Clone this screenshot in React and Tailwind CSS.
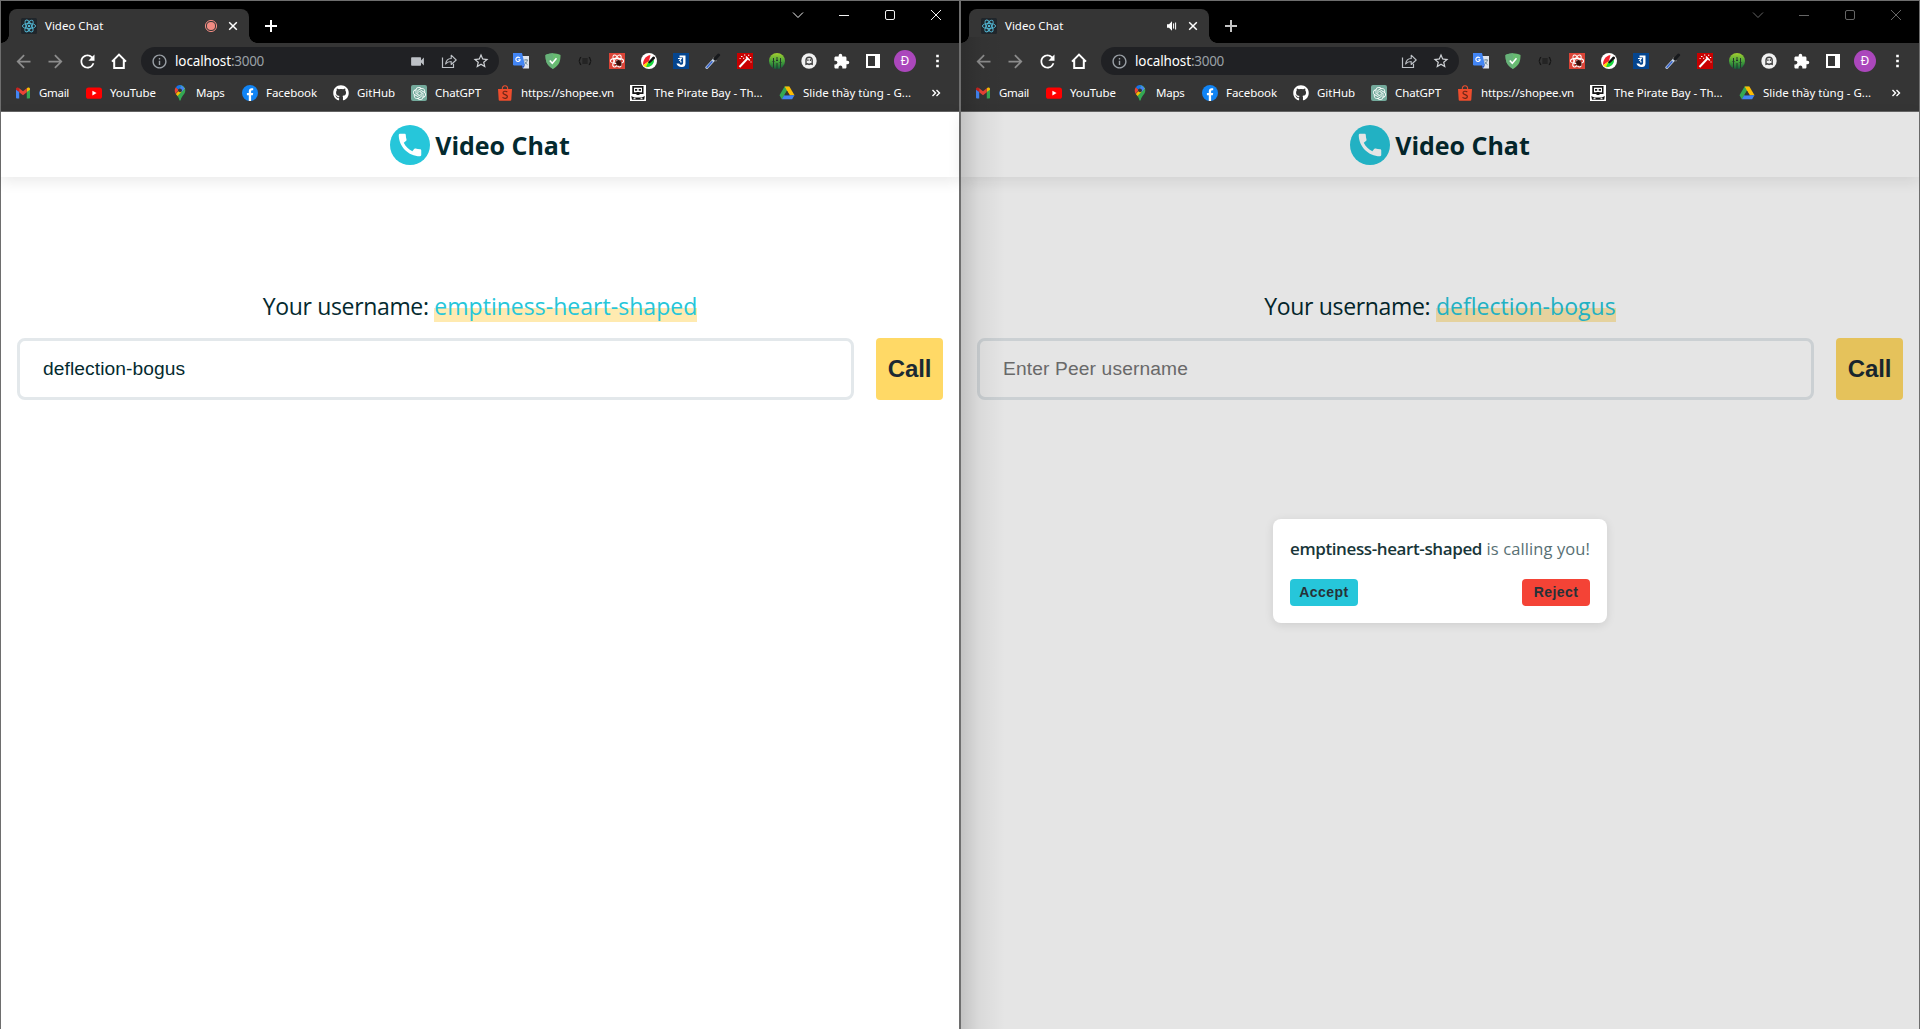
import { FaGithub } from 'react-icons/fa'
import { SiOpenai } from 'react-icons/si'
import {
  MdArrowBack, MdArrowForward, MdRefresh, MdOutlineInfo, MdVideocam,
  MdStarOutline, MdExtension, MdCall,
} from 'react-icons/md'

const Svg = ({ size = 16, box = '0 0 16 16', className = '', children }) => (
  <svg width={size} height={size} viewBox={box} className={'block shrink-0 ' + className} fill="none">
    {children}
  </svg>
)

/* ---------- tab and toolbar icons ---------- */

const Atom = ({ stroke, width = 0.9 }) => (
  <g stroke={stroke} strokeWidth={width}>
    <ellipse cx="8" cy="8" rx="6.6" ry="2.6" />
    <ellipse cx="8" cy="8" rx="6.6" ry="2.6" transform="rotate(60 8 8)" />
    <ellipse cx="8" cy="8" rx="6.6" ry="2.6" transform="rotate(120 8 8)" />
    <circle cx="8" cy="8" r="1.2" fill={stroke} stroke="none" />
  </g>
)

const ReactFavicon = () => (
  <Svg><rect width="16" height="16" rx="1.5" fill="#20262b" /><Atom stroke="#53b9d6" /></Svg>
)

const Recording = () => (
  <Svg size={14} box="0 0 14 14">
    <circle cx="7" cy="7" r="5.6" stroke="#f28b82" strokeWidth="1" />
    <circle cx="7" cy="7" r="4.1" fill="#f28b82" />
  </Svg>
)

const Speaker = () => (
  <Svg size={14} box="0 0 14 14">
    <path d="M3 5.3h2l3-3v9.4l-3-3H3z" fill="#fff" />
    <path d="M9.6 4.4v5.2M11.6 3.5v7" stroke="#fff" strokeWidth="1" />
  </Svg>
)

const Home = () => (
  <Svg size={18} box="0 0 18 18">
    <path d="M2 9.6 9 2.6l7 7M4.2 8v8h9.6V8" stroke="#fff" strokeWidth="2" />
  </Svg>
)

const Share = () => (
  <Svg size={16}>
    <path d="M1.5 4.5v10h11v-3.800" stroke="#bdc1c6" strokeWidth="1.2" />
    <path d="M4.600 11c.5-3.600 2.400-5.400 5.600-5.500V2.200L15.200 7l-5 4.500V8.500C7.700 8.500 6 9.200 4.600 11z" stroke="#bdc1c6" strokeWidth="1.1" strokeLinejoin="round" />
  </Svg>
)

/* ---------- extension icons ---------- */

const Translate = () => (
  <Svg>
    <path d="M6 3h10v12.500h-6z" fill="#dfe3ea" />
    <path d="M0 0h9l3 12.500H1.200A1.200 1.200 0 0 1 0 11.300z" fill="#4285f4" />
    <path d="M8.500 12.500H12L9.800 15.500z" fill="#2a56c6" />
    <path d="M6.900 5.100A2.200 2.200 0 1 0 7.200 6.700H5.200" stroke="#fff" strokeWidth="1.100" />
    <path d="M10.800 7h4.200M13 6v1M14.400 7c-.4 2-1.600 3.500-3 4.400M11.800 8.600c.6 1.300 1.500 2.300 2.700 3" stroke="#607d8b" strokeWidth=".8" />
  </Svg>
)
const Shield = () => (
  <Svg>
    <path d="M8 .2C10.500.2 13.300.9 15.500 2c0 6-1.100 10.400-7.500 13.900C1.600 12.400.5 8 .5 2 2.700.9 5.500.2 8 .2z" fill="#68bc71" />
    <path d="M8 .2C5.500.2 2.700.9.5 2c0 6 1.100 10.400 7.500 13.900z" fill="#67b279" />
    <path d="m4.800 7.500 2.500 2.700L11.500 5.300" stroke="#fff" strokeWidth="1.600" />
  </Svg>
)
const Braces = () => (
  <Svg>
    <path d="M4.200 4.300C2.300 4.300 3.300 7.900 1.700 8c1.600.1.600 3.700 2.500 3.700M11.800 4.300c1.900 0 .9 3.600 2.500 3.700-1.600.1-.6 3.700-2.500 3.700M5.300 6h5.400M5.300 8h5.400M5.300 10h5.400" stroke="#151515" strokeWidth="1.200" />
  </Svg>
)
const ReactTools = () => (
  <Svg>
    <rect width="16" height="16" fill="#db4437" />
    <Atom stroke="#fff" width={1.1} />
    <ellipse cx="9.800" cy="9.800" rx="2.400" ry="2.900" fill="#3a0f0b" transform="rotate(-40 9.800 9.800)" />
    <path d="m6.500 9.500 6 3M8 13l3.500-6M6 11.500h6.500M7.600 7.500l4 5.500" stroke="#3a0f0b" strokeWidth=".8" />
  </Svg>
)
const ColorPick = () => (
  <Svg>
    <circle cx="8" cy="8" r="8" fill="#fff" />
    <path d="M2.200 12.200C1.500 8 4 3 9.500 2L8 8z" fill="#f5222d" />
    <path d="M2.200 12.200 8 8l1 5.200c-2 1.700-5 1.500-6.800-1z" fill="#ffe000" />
    <path d="M5 13.800 8 8l5-1c.3 4-3.500 7.600-8 6.800z" fill="#18d63f" />
    <path d="m7 9.300 4.800-5.500a1.400 1.400 0 0 1 2 1.900L8.500 10.500z" fill="#111" />
  </Svg>
)
const JTile = () => (
  <Svg>
    <rect width="16" height="16" fill="#04458f" />
    <path d="M6.500 2.500h6v8a3.700 3.700 0 0 1-4 3.500c-2.500 0-4.500-1.300-5-3.500h2.700c.4.900 1.200 1.300 2.100 1.300 1.200 0 1.800-.8 1.800-2V4.500H6.500z" fill="#fff" />
    <path d="M5 5.500h3.200L6.700 7.500c1.200.2 1.500 1.200 1 2" stroke="#fff" strokeWidth="1.200" />
  </Svg>
)
const Dropper = () => (
  <Svg>
    <path d="m1.800 14.500 7.400-8" stroke="#c9d6e8" strokeWidth="2.800" strokeLinecap="round" />
    <path d="m2 14.200 5-5.400" stroke="#3461c9" strokeWidth="1.600" strokeLinecap="round" />
    <path d="m8 4.700 3.500 3.500" stroke="#777" strokeWidth="1.600" />
    <path d="m10 6 3.600-4" stroke="#17191c" strokeWidth="3" strokeLinecap="round" />
  </Svg>
)
const Wand = () => (
  <Svg>
    <rect width="16" height="16" fill="#c80000" />
    <path d="m2.500 14 8-8.500" stroke="#fff" strokeWidth="2" />
    <path d="m9 3.500 3.800 4" stroke="#fff" strokeWidth="1.500" />
    <path d="M4 3.500h1.500M7 2h1.300M11 2.200h1.300M13 4.500h1.200M6 5.300h1.200M2.600 5.500h1M13.500 9h1" stroke="#fff" strokeWidth="1.100" />
  </Svg>
)
const Sliders = () => (
  <Svg>
    <defs>
      <linearGradient id="sliders" x1="0" y1="0" x2="0" y2="1">
        <stop offset="0" stopColor="#a4cf2f" /><stop offset=".5" stopColor="#4aa63a" /><stop offset="1" stopColor="#14603c" />
      </linearGradient>
    </defs>
    <circle cx="8" cy="8" r="8" fill="url(#sliders)" />
    <path d="M4.500 5v10M8 4v3M8 10v6M11.500 5v10M3.500 8.500h2M7 7.500h2M10.500 9.500h2" stroke="#26392c" strokeWidth="1" />
  </Svg>
)
const Ghost = () => (
  <Svg>
    <circle cx="8" cy="8" r="7.700" fill="#f1f1f1" />
    <path d="M5 11.300V7.300a3 3 0 0 1 6.200 0v4L9.700 10.800l-1.600.7-1.600-.7z" stroke="#444" strokeWidth="1.400" />
    <path d="M6.300 6.300h1.200V8H6.300zM8.800 6.300H10V8H8.800z" fill="#444" />
  </Svg>
)
const SidePanel = () => (
  <Svg size={14} box="0 0 14 14">
    <rect x="1" y="1" width="12" height="12" stroke="#fff" strokeWidth="2" />
    <path d="M9 0h5v14H9z" fill="#fff" />
  </Svg>
)
const Dots = () => (
  <Svg><path d="M7.200 1.700h2.600v2.600H7.200zM7.200 6.700h2.600v2.600H7.200zM7.200 11.700h2.600v2.600H7.200z" fill="#fff" /></Svg>
)
const Avatar = () => (
  <span className="flex h-[22px] w-[22px] items-center justify-center rounded-full bg-[#ab47bc] font-['Noto_Sans',sans-serif] text-[12px] leading-none text-white">Đ</span>
)

const extensions = [
  Translate, Shield, Braces, ReactTools, ColorPick, JTile, Dropper, Wand, Sliders, Ghost,
  () => <MdExtension size={17} className="text-white" />, SidePanel, Avatar, Dots,
]

/* ---------- bookmark icons ---------- */

const Gmail = () => (
  <Svg>
    <path d="M1 4v8.700c0 .5.400.8.900.8h2.300V6.300z" fill="#4285f4" />
    <path d="M15 4v8.700c0 .5-.4.8-.9.8h-2.300V6.300z" fill="#34a853" />
    <path d="M11.800 3.300v3.800L15 4.700V3.900c0-1.400-1.500-1.900-2.400-1.200z" fill="#fbbc04" />
    <path d="M1 3.900v.8l3.200 2.400V3.300l-.8-.6C2.500 2 1 2.500 1 3.900z" fill="#c5221f" />
    <path d="M4.200 7.300v-4L8 6.200l3.800-2.900v4L8 10.200z" fill="#ea4335" />
  </Svg>
)
const YouTube = () => (
  <Svg><rect y="2.500" width="16" height="11.300" rx="2.600" fill="#f00" /><path d="m6.400 5.700 4.200 2.400-4.200 2.400z" fill="#fff" /></Svg>
)
const Maps = () => (
  <Svg>
    <path d="M8 0a5.300 5.300 0 0 1 5.300 5.400c0 4-3.600 5-4.600 9.500-.2.900-1.200.9-1.400 0-.4-2-1.300-3.300-2.300-4.500z" fill="#34a853" />
    <path d="M3.800 9 10 2l2.800 1.300L5.500 11z" fill="#fbbc04" />
    <path d="M3.900 2.200 6.700 5 3.700 8.700C2.400 6.700 2.300 4.200 3.900 2.200z" fill="#ea4335" />
    <path d="M3.900 2.200A5.300 5.300 0 0 1 9.700.3L6.500 4.800z" fill="#1a73e8" />
    <path d="m9.700.3 3.100 3.100L9.500 7 7.500 4z" fill="#4285f4" />
    <circle cx="8" cy="5.300" r="1.900" fill="#353535" />
  </Svg>
)
const Facebook = () => (
  <Svg>
    <circle cx="8" cy="8" r="8" fill="#1184f4" />
    <path d="M6.800 16v-5.700H4.900V8h1.900V6.300c0-2 1.200-3 2.900-3 .8 0 1.500.1 1.500.1v1.900h-.9c-1 0-1.200.6-1.200 1.200V8h2.100l-.4 2.300H9.100V16z" fill="#fff" />
  </Svg>
)
const GitHub = () => <FaGithub size={16} className="shrink-0 text-white" />
const ChatGPT = () => (
  <span className="flex h-4 w-4 shrink-0 items-center justify-center rounded-[2px] bg-[#74aa9c]">
    <SiOpenai size={13} className="text-white" />
  </span>
)
const Shopee = () => (
  <Svg>
    <path d="M5.300 4.200C5.300 2 6.400.8 8 .8s2.700 1.200 2.700 3.400" stroke="#ee4d2d" strokeWidth="1.100" />
    <path d="M1 4h14l-.7 10.700c0 .7-.5 1.100-1.200 1.100H2.900c-.7 0-1.200-.4-1.200-1.100z" fill="#ee4d2d" />
    <path d="M10.300 6.900C9 5.900 6 5.900 6 7.900c0 2 4.400 1.500 4.400 3.700 0 2.200-3.300 2.200-4.900.8" stroke="#6b2416" strokeWidth="1.200" />
  </Svg>
)
const Pirate = () => (
  <Svg>
    <rect width="16" height="16" fill="#fff" />
    <path d="M2.300 1h11.200v8H2.300zM1.300 11l3 1.500h7.500l3-1.500-.6 3.700H2z" fill="#161616" />
    <path d="M4 2.700h8v4.600H4z" fill="#fff" />
    <path d="M5 4h2.200v1.800H5zM8.700 4H11v1.800H8.700zM6.500 7h3v3h-3z" fill="#161616" />
    <path d="M3.500 13.700h2M10.500 13.700h2" stroke="#fff" />
  </Svg>
)
const Drive = () => (
  <Svg>
    <path d="M5.600 1.500h4.800L5.200 10.400 2.800 14.300.5 10.300z" fill="#34a853" />
    <path d="M5.600 1.500h4.800l5.100 8.800h-4.800z" fill="#fbbc04" />
    <path d="M5.200 10.300h10.300l-2.400 4H2.800z" fill="#4285f4" />
    <path d="m8 5.700 2.700 4.600H5.300z" fill="#353535" />
  </Svg>
)

const bookmarks = [
  { Icon: Gmail, label: 'Gmail', cell: 'w-[71px]', tracking: 'tracking-[-0.3px]' },
  { Icon: YouTube, label: 'YouTube', cell: 'w-[86px]', tracking: 'tracking-[-0.07px]' },
  { Icon: Maps, label: 'Maps', cell: 'w-[70px]', tracking: 'tracking-[-0.24px]' },
  { Icon: Facebook, label: 'Facebook', cell: 'w-[91px]', tracking: 'tracking-[-0.07px]' },
  { Icon: GitHub, label: 'GitHub', cell: 'w-[78px]', tracking: 'tracking-[-0.03px]' },
  { Icon: ChatGPT, label: 'ChatGPT', cell: 'w-[86px]', tracking: 'tracking-[-0.1px]' },
  { Icon: Shopee, label: 'https://shopee.vn', cell: 'w-[133px]', tracking: 'tracking-[-0.13px]' },
  { Icon: Pirate, label: 'The Pirate Bay - Th...', cell: 'w-[149px]', tracking: 'tracking-[-0.05px]' },
  { Icon: Drive, label: 'Slide thầy tùng - G...', cell: 'w-[149px]', tracking: 'tracking-[0px]' },
]

/* ---------- browser chrome ---------- */

function TabStrip({ active }) {
  return (
    <div className="flex h-[42px] bg-black">
      <div className="relative ml-2 mt-2 flex h-[34px] w-60 items-center rounded-t-lg bg-[#353535] pl-3">
        <span className="absolute -left-2 bottom-0 h-2 w-2 bg-[radial-gradient(circle_at_0_0,transparent_7.500px,#353535_8px)]" />
        <span className="absolute -right-2 bottom-0 h-2 w-2 bg-[radial-gradient(circle_at_100%_0,transparent_7.500px,#353535_8px)]" />
        <ReactFavicon />
        <span className="ml-2 flex-1 text-[11.500px] leading-4 text-white">Video Chat</span>
        {active ? <Recording /> : <Speaker />}
        <Svg size={14} box="0 0 14 14" className="ml-2 mr-[9px]">
          <path d="m3.200 3.200 7.600 7.600m0-7.600-7.600 7.600" stroke="#fff" strokeWidth="1.500" />
        </Svg>
      </div>
      <Svg size={14} box="0 0 14 14" className="ml-[15px] mt-[18px]">
        <path d="M7 1v12M1 7h12" stroke={active ? '#fff' : '#c4c4c4'} strokeWidth="2" />
      </Svg>
      <div className={'ml-auto flex h-7 ' + (active ? 'text-white' : 'text-[#6a6a6a]')}>
        {['M1 3.500l5 5 5-5', 'M1 6.500h10', 'M3 1.500h6a1.500 1.500 0 0 1 1.500 1.500v6a1.500 1.500 0 0 1-1.500 1.500H3A1.500 1.500 0 0 1 1.500 9V3A1.500 1.500 0 0 1 3 1.500z', 'M1 1l10 10M11 1 1 11'].map((d) => (
          <div key={d} className="flex w-[46px] items-center justify-center">
            <Svg size={12} box="0 0 12 12"><path d={d} stroke="currentColor" strokeWidth="0.950" /></Svg>
          </div>
        ))}
      </div>
    </div>
  )
}

const Cell = ({ children }) => <div className="flex w-8 shrink-0 items-center justify-center">{children}</div>

function Toolbar({ active }) {
  return (
    <div className="flex h-9 items-center pl-[6px]">
      <Cell><MdArrowBack size={21} className="text-[#8c8c8c]" /></Cell>
      <Cell><MdArrowForward size={21} className="text-[#8c8c8c]" /></Cell>
      <Cell><MdRefresh size={21} className="text-white" /></Cell>
      <Cell><Home /></Cell>
      <div className="mx-[6px] flex h-7 w-[358px] shrink-0 items-center rounded-full bg-[#202124] pl-[10px] pr-[2px]">
        <MdOutlineInfo size={17} className="text-[#9aa0a6]" />
        <p className="ml-[7px] flex-1 text-[13.500px] leading-5 tracking-[-0.12px] text-white">
          localhost<span className="tracking-[-0.3px] text-[#9aa0a6]">:3000</span>
        </p>
        {active && <Cell><MdVideocam size={17} className="text-[#bdc1c6]" /></Cell>}
        <Cell><Share /></Cell>
        <Cell><MdStarOutline size={18} className="text-[#d0d3d7]" /></Cell>
      </div>
      {extensions.map((Icon, i) => <Cell key={i}><Icon /></Cell>)}
    </div>
  )
}

function Bookmarks() {
  return (
    <div className="flex h-[33px] items-center border-b border-[#666] pb-1 pl-[14px]">
      {bookmarks.map(({ Icon, label, cell, tracking }) => (
        <div key={label} className={'flex shrink-0 items-center gap-2 ' + cell}>
          <Icon />
          <span className={'whitespace-nowrap text-[11.500px] leading-4 text-white ' + tracking}>{label}</span>
        </div>
      ))}
      <Svg size={10} box="0 0 10 10" className="ml-[3px]">
        <path d="m1.500 2 3 3-3 3M5.500 2l3 3-3 3" stroke="#fff" strokeWidth="1.400" />
      </Svg>
    </div>
  )
}

/* ---------- video chat page ---------- */

function IncomingCall({ caller }) {
  return (
    <div className="absolute inset-0 flex items-center justify-center bg-black/10 pt-px">
      <div className="h-[104px] w-[334px] rounded-lg bg-white px-[17px] pt-4 shadow-[0_2px_10px_rgba(0,0,0,0.1)]">
        <p className="flex h-[27px] items-center justify-between whitespace-nowrap font-['Open_Sans',sans-serif] text-[17px] leading-[27px]">
          <span className="font-semibold tracking-[-0.39px] text-[#183639]">{caller}</span>
          <span className="text-[16.500px] tracking-[0.1px] text-[#587074]">is calling you!</span>
        </p>
        <div className="mt-[17px] flex justify-between font-['Liberation_Sans',sans-serif] text-[14px] font-bold tracking-[0.45px] text-[#263238]">
          <button className="h-[27px] w-[68px] rounded bg-[#26c6da]">Accept</button>
          <button className="h-[27px] w-[68px] rounded bg-[#f44336]">Reject</button>
        </div>
      </div>
    </div>
  )
}

function ChatPage({ username, peer, caller }) {
  return (
    <div className="relative flex-1 bg-white font-['Open_Sans',sans-serif] text-[#042a2f]">
      <header className="flex h-[65px] items-center justify-center gap-[5px] shadow-[0_4px_14px_rgba(0,0,0,0.09)]">
        <span className="flex h-10 w-10 items-center justify-center rounded-full bg-[#26c6da]">
          <MdCall size={30} className="text-white" />
        </span>
        <h1 className="text-[25px] font-bold leading-9 tracking-[-0.02px]">Video Chat</h1>
      </header>
      <main className="px-4 pt-[111px]">
        <p className="text-center text-[23px] leading-9 tracking-[-0.34px]">
          Your username:{' '}
          <span className="bg-[linear-gradient(transparent_18px,#ffeab0_18px)] tracking-[0.03px] text-[#26c6da]">{username}</span>
        </p>
        <form className="mt-[14px] flex gap-[22px] font-['Liberation_Sans',sans-serif]">
          <div className={'flex h-[62px] w-[837px] items-center rounded-lg border-[3px] border-[#e3e8eb] pl-[23px] text-[19.200px] ' + (peer ? 'tracking-[0.09px]' : 'tracking-[0.14px] text-[#757575]')}>
            {peer || 'Enter Peer username'}
          </div>
          <button type="button" className="h-[62px] w-[67px] rounded bg-[#ffd966] text-[24px] font-bold tracking-[-0.1px] text-[#1b2a33]">Call</button>
        </form>
      </main>
      {caller && <IncomingCall caller={caller} />}
    </div>
  )
}

function BrowserWindow({ active, ...page }) {
  return (
    <section className="relative flex h-full w-[960px] shrink-0 flex-col border-x border-t border-[#6e6e6e] bg-[#353535] font-['Noto_Sans',sans-serif]">
      <TabStrip active={active} />
      <Toolbar active={active} />
      <Bookmarks />
      <ChatPage {...page} />
      {!active && <div className="absolute bottom-0 left-0 top-9 w-11 bg-[linear-gradient(to_right,rgba(0,0,0,0.15),rgba(0,0,0,0.05)_40%,transparent)]" />}
    </section>
  )
}

export default function App() {
  return (
    <div className="flex h-[1029px] w-[1920px] overflow-hidden">
      <BrowserWindow active username="emptiness-heart-shaped" peer="deflection-bogus" />
      <BrowserWindow active={false} username="deflection-bogus" caller="emptiness-heart-shaped" />
    </div>
  )
}
